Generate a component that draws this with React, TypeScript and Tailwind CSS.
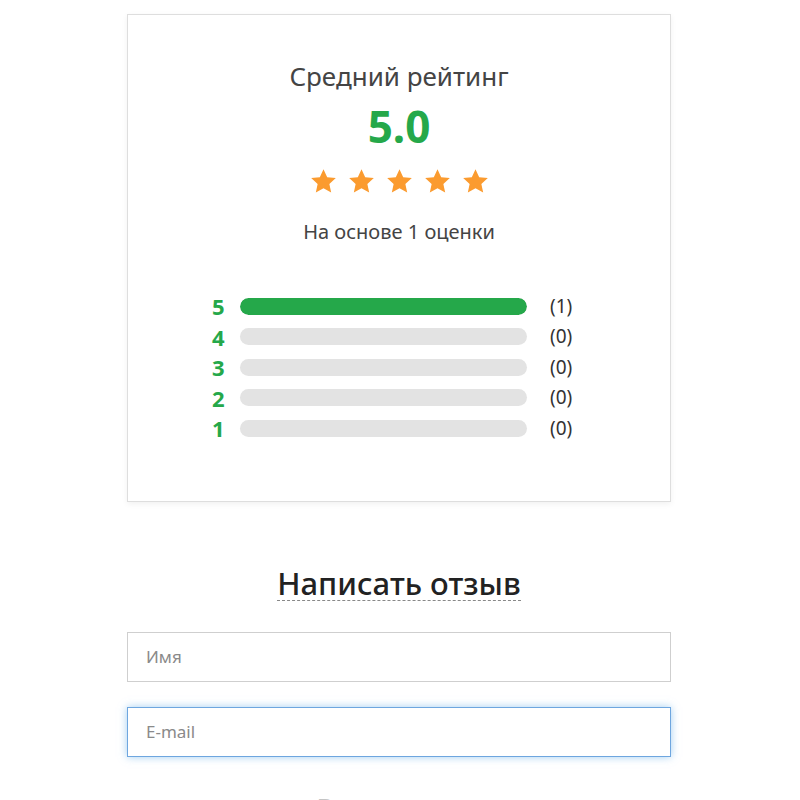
import React from "react";

const Star = () => (
  <svg width="29" height="29" viewBox="0 0 24 24" className="block">
    <path
      d="M12 1.8l3.05 6.6 7.15.8-5.35 4.85 1.5 7.05L12 17.5l-6.35 3.6 1.5-7.05L1.8 9.2l7.15-.8z"
      fill="#fb9b2f"
    />
  </svg>
);

const rows = [
  { n: 5, c: 1, pct: 100 },
  { n: 4, c: 0, pct: 0 },
  { n: 3, c: 0, pct: 0 },
  { n: 2, c: 0, pct: 0 },
  { n: 1, c: 0, pct: 0 },
];

export default function App() {
  return (
    <div
      className="w-[800px] h-[800px] overflow-hidden bg-white pt-[14px]"
      style={{ fontFamily: '"Noto Sans", "Open Sans", sans-serif' }}
    >
      <div className="ml-[127px] w-[544px]">
        <div className="h-[488px] border border-[#dedede] shadow-[0_2px_6px_rgba(0,0,0,0.06)] pt-[43px] flex flex-col items-center">
          <div className="text-[26px] leading-[36px] text-[#444]">Средний рейтинг</div>
          <div className="mt-[8px] text-[44px] leading-[48px] font-bold text-[#25a84a]">5.0</div>
          <div className="mt-[17px] flex gap-[9px] h-[28px] items-center">
            <Star />
            <Star />
            <Star />
            <Star />
            <Star />
          </div>
          <div className="mt-[25px] text-[20px] leading-[24px] text-[#444]">На основе 1 оценки</div>
          <div className="mt-[47px] self-start ml-[84px] flex flex-col">
            {rows.map((r) => (
              <div key={r.n} className="h-[30.5px] flex items-center">
                <div className="w-[28px] text-[22px] font-bold text-[#25a84a] leading-none">{r.n}</div>
                <div className="w-[287px] h-[17px] rounded-full bg-[#e3e3e3] overflow-hidden">
                  <div className="h-full rounded-full bg-[#25a84a]" style={{ width: `${r.pct}%` }} />
                </div>
                <div className="ml-[23px] text-[19px] text-[#333] leading-none">({r.c})</div>
              </div>
            ))}
          </div>
        </div>

        <div className="mt-[65px] flex justify-center">
          <div className="text-[31px] leading-[33px] text-[#222] font-medium border-b border-dashed border-[#888]">
            Написать отзыв
          </div>
        </div>

        <div className="mt-[31px] h-[50px] border border-[#cfcfcf] flex items-center pl-[18px] text-[17px] text-[#8a8a8a]">
          Имя
        </div>
        <div className="mt-[25px] h-[50px] border border-[#6ea6df] shadow-[0_0_8px_rgba(102,175,233,0.6)] flex items-center pl-[18px] text-[17px] text-[#8a8a8a]">
          E-mail
        </div>
        <div className="mt-[34px] text-center text-[26px] leading-[32px] text-[#c4c4c4]">Ваша оценка</div>
      </div>
    </div>
  );
}
